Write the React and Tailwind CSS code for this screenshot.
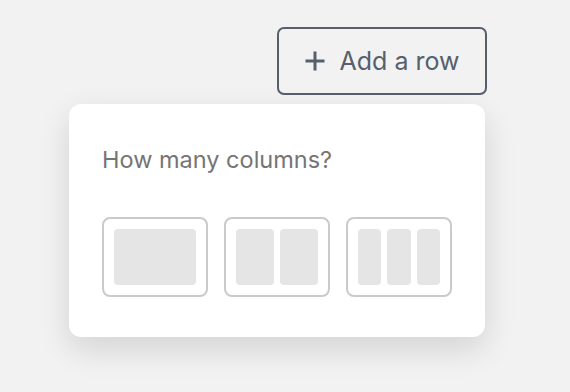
export default function App() {
  const options = [1, 2, 3]

  return (
    <div className="min-h-screen w-full bg-[#f2f2f2] font-['Inter',sans-serif]">
      <div className="ml-[69px] pt-[27px] w-[418px] flex flex-col items-end">
        {/* Add a row button */}
        <button className="h-[68px] w-[210px] flex items-center justify-center gap-[15px] border-2 border-[#56606c] rounded-[7px] bg-[#f2f2f2] text-[#56606c]">
          <svg width="20" height="20" viewBox="0 0 20 20" className="shrink-0">
            <path d="M10 0.5V19.5M0.5 10H19.5" stroke="currentColor" strokeWidth="3" />
          </svg>
          <span className="text-[25px] leading-none">Add a row</span>
        </button>

        {/* Columns popover */}
        <div className="self-start mt-[9px] w-[416px] bg-white rounded-[12px] shadow-[0_12px_32px_rgba(0,0,0,0.13)] px-[33px] pt-[42px] pb-[40px]">
          <p className="text-[23.5px] leading-[28px] text-[#757575]">How many columns?</p>
          <div className="mt-[43px] flex gap-[16px]">
            {options.map((n) => (
              <div
                key={n}
                className="w-[106px] h-[80px] border-2 border-[#cacaca] rounded-[8px] p-[10px] flex gap-[6px]"
              >
                {Array.from({ length: n }).map((_, i) => (
                  <div key={i} className="flex-1 bg-[#e5e5e5] rounded-[4px]" />
                ))}
              </div>
            ))}
          </div>
        </div>
      </div>
    </div>
  )
}
